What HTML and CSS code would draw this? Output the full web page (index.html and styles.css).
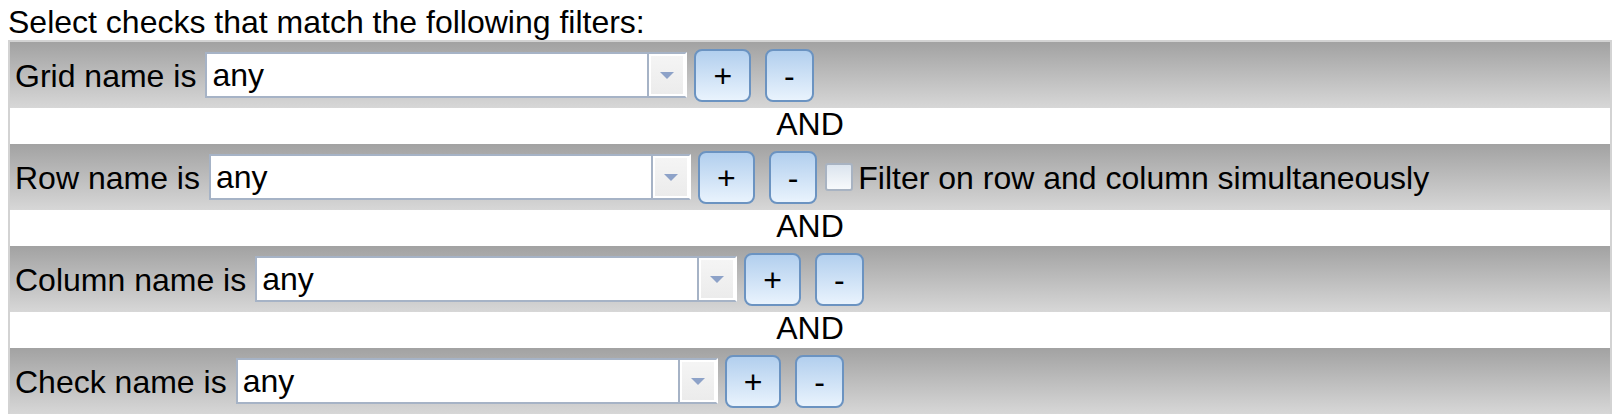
FILE: index.html
```html
<!DOCTYPE html>
<html>
<head>
<meta charset="utf-8">
<link rel="stylesheet" href="styles.css">
</head>
<body>
<div class="title">Select checks that match the following filters:</div>
<div class="filters">
  <div class="row">
    <span class="label">Grid name is</span>
    <div class="select"><span class="value">any</span><span class="arrow"><i class="tri"></i></span></div>
    <button class="btn">+</button><button class="btn minus">-</button>
  </div>
  <div class="and">AND</div>
  <div class="row">
    <span class="label">Row name is</span>
    <div class="select"><span class="value">any</span><span class="arrow"><i class="tri"></i></span></div>
    <button class="btn">+</button><button class="btn minus">-</button>
    <span class="check"></span><span class="label">Filter on row and column simultaneously</span>
  </div>
  <div class="and">AND</div>
  <div class="row">
    <span class="label">Column name is</span>
    <div class="select"><span class="value">any</span><span class="arrow"><i class="tri"></i></span></div>
    <button class="btn">+</button><button class="btn minus">-</button>
  </div>
  <div class="and">AND</div>
  <div class="row">
    <span class="label">Check name is</span>
    <div class="select"><span class="value">any</span><span class="arrow"><i class="tri"></i></span></div>
    <button class="btn">+</button><button class="btn minus">-</button>
  </div>
</div>
</body>
</html>
```

FILE: styles.css
```css
html, body {
  background: #fff;
}
body {
  margin: 8px;
  font-family: "Liberation Sans", Arial, sans-serif;
  font-size: 32px;
  color: #000;
}
.title {
  line-height: 28px;
  padding-bottom: 4px;
  white-space: nowrap;
}
.filters {
  border: 2px solid #d3d3d3;
  border-bottom: none;
}
.row {
  display: flex;
  align-items: center;
  height: 66px;
  padding-left: 5px;
  background: linear-gradient(#a2a2a2, #d7d7d7);
}
.label {
  line-height: 32px;
  padding-top: 1px;
  white-space: pre;
}
.row > .label:first-child {
  margin-right: 9px;
}
.select {
  display: flex;
  width: 482px;
  height: 46px;
  box-sizing: border-box;
  border: 2px solid #a6b3c6;
  border-right: 2px solid #fff;
  background: #fff;
}
.value {
  flex: 1;
  padding-left: 5px;
  line-height: 42px;
}
.arrow {
  width: 36px;
  border-left: 2px solid #a6b3c6;
  box-shadow: inset 0 0 0 2px #fff;
  background: linear-gradient(#f5f5f5, #ebebeb);
  display: flex;
  align-items: center;
  justify-content: center;
}
.tri {
  width: 0;
  height: 0;
  border-left: 7px solid transparent;
  border-right: 7px solid transparent;
  border-top: 7px solid #8da2c8;
}
.btn {
  font: inherit;
  color: #000;
  height: 53px;
  box-sizing: border-box;
  padding: 1px 17px 0;
  margin: 0 0 0 7px;
  border: 2px solid #6b93c1;
  border-radius: 8px;
  background: linear-gradient(#b2cfee, #e9f3fd);
  line-height: 32px;
}
.btn.minus {
  margin-left: 14px;
}
.check {
  width: 28px;
  height: 28px;
  box-sizing: border-box;
  margin: 0 5px 0 8px;
  border: 2px solid #a8b3c2;
  border-radius: 3px;
  background: linear-gradient(#dbe4ee, #f8fafc);
}
.and {
  text-align: center;
  line-height: 32px;
  padding-bottom: 4px;
  height: 32px;
  background: #fff;
}
```
